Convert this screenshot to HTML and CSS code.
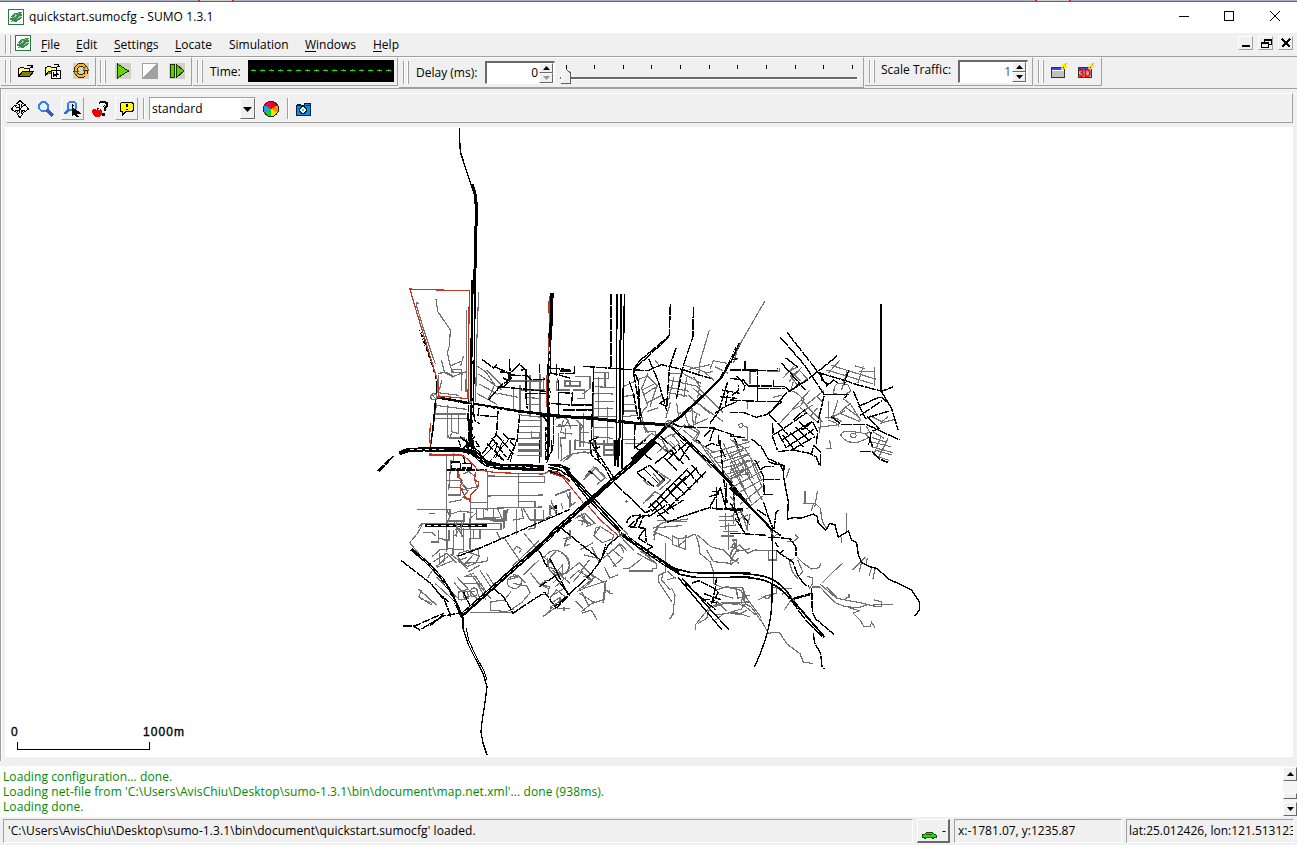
FILE: index.html
```html
<!DOCTYPE html>
<html lang="en">
<head>
<meta charset="utf-8">
<title>quickstart.sumocfg - SUMO 1.3.1</title>
<link rel="stylesheet" href="styles.css">
</head>
<body>
<svg width="0" height="0" class="defs"><defs>
<symbol id="logo" viewBox="0 0 16 16"><path d="M.5.5h15v15H.5z" fill="#fff" stroke="#287d3c"/><path d="M2 8l3-2 1-2h3l1-1h4v1l-2 1h2v2l-2 1h2l-1 2-3 1-2 2H3v-1l2-1H2V9l3-1z" fill="#3c8a50"/><path d="M5 9l4-3M9 10l4-3M10 4v1M7 5h1M4 12h2" stroke="#a4d0ad"/></symbol>
<symbol id="spark" viewBox="0 0 6 6"><path d="M0 3h6M3 0v6M1 1l4 4M1 5l4-4" stroke="#ffe800"/><path d="M4 1h1V0h1v1H5v1H4zM0 4h1v1H0z" fill="#f08020"/></symbol>
</defs></svg>
<div class="window">
<div class="desktop-strip"><i></i><i></i></div>
<header class="titlebar"><svg class="logo"><use href="#logo"/></svg><span>quickstart.sumocfg - SUMO 1.3.1</span>
<svg class="caption" viewBox="0 0 101 11"><path d="M0 5.5h10M45.5.5h9v9h-9z" fill="none" stroke="#000"/><path d="m91 0 10 10M101 0 91 10" stroke="#000" shape-rendering="auto"/></svg></header>
<nav class="menubar"><i class="grip"></i><svg class="logo"><use href="#logo"/></svg>
<div class="menus"><span class="file"><u>F</u>ile</span><span class="edit"><u>E</u>dit</span><span class="settings"><u>S</u>ettings</span><span class="locate"><u>L</u>ocate</span><span class="simulation">Simulation</span><span class="windows"><u>W</u>indows</span><span><u>H</u>elp</span></div>
<div class="mdi-buttons"><b><svg viewBox="0 0 14 12"><path d="M3 9h8" stroke="#000" stroke-width="2"/></svg></b><b><svg viewBox="0 0 14 12"><path d="M5.500 6.500v-4h7v5h-3M5 3h8M2.500 5.500h7v5h-7zM2 6h8" fill="none" stroke="#000"/></svg></b><b><svg viewBox="0 0 14 12"><path d="m3 2 8 8M11 2l-8 8" stroke="#000" stroke-width="2.600"/></svg></b></div></nav>
<section class="toolbars">
<div class="bar files"><i class="grip"></i>
<svg class="icon" viewBox="0 0 16 16"><path d="M.500 13.500v-8h1l1-1h3l1 1h5v3" fill="#ffff80" stroke="#000"/><path d="m.500 13.500 4-5h11l-4 5z" fill="#808000" stroke="#000"/><path d="M9 3V2h4v2M12 4h3M14 2v3" fill="none" stroke="#000"/></svg>
<svg class="icon" viewBox="0 0 16 16"><path d="M.500 12.500v-8h1l1-1h3l1 1h5v3" fill="#ffff80" stroke="#000"/><path d="m.500 12.500 3-4h8" fill="#808000" stroke="#000"/><path d="M9 2V1h4v2M12 3h3" fill="none" stroke="#000"/><path d="M6.500 7.500h9v8h-9z" fill="#fff" stroke="#000"/><path d="M8 9v5l5-4M8 11h6M11 8v6" stroke="#000" fill="none"/></svg>
<svg class="icon" viewBox="0 0 16 16"><path fill="#d4d0c8" d="M0 0h16v16H0z"/><path d="M3 10V5l3-3h4l3 3" fill="none" stroke="#322600" stroke-width="4"/><path d="M13 7v3l-3 3H6l-3-3" fill="none" stroke="#322600" stroke-width="4"/><path d="M3 9V5l3-3h4l3 3M13 8v3l-3 2H6l-3-3" fill="none" stroke="#fdb813" stroke-width="2"/><path d="M10 7h6l-3-4zM0 8h6l-3 4z" fill="#fdb813" stroke="#322600" stroke-width=".7"/></svg></div>
<div class="bar run"><i class="grip"></i>
<svg class="icon" viewBox="0 0 16 16"><path fill="#d4d0c8" d="M0 0h16v16H0z"/><path d="M2.500 1v14l11-7z" fill="#65d500" stroke="#123800"/></svg>
<svg class="icon" viewBox="0 0 16 16"><path fill="#fff" d="M0 0h16v16H0z"/><path d="M15 0v15H0z" fill="#a0a0a0"/><path d="M.500.500h15v15H.500z" fill="none" stroke="#a0a0a0"/></svg>
<svg class="icon" viewBox="0 0 16 16"><path fill="#d4d0c8" d="M0 0h16v16H0z"/><path d="M1 1.500h4v13H1zM7 1v14l8-7z" fill="#65c900" stroke="#123800"/></svg></div>
<div class="bar clock"><i class="grip"></i><span>Time:</span><svg class="lcd" viewBox="0 0 146 22"><path fill="#000" d="M0 0h146v22H0z"/><path d="M3 10.500h140" stroke="#00f000" stroke-dasharray="5 4"/><path d="M5 9.500h138" stroke="#00b000" stroke-dasharray="1 8"/></svg></div>
<div class="bar delay"><i class="grip"></i><span>Delay (ms):</span><div class="spin"><span>0</span><div><i class="up"></i><i class="down off"></i></div></div>
<svg class="slider" viewBox="0 0 300 24"><path d="M7.500 5v4M35.500 5v4M64.500 5v4M92.500 5v4M121.500 5v4M150.500 5v4M178.500 5v4M207.500 5v4M236.500 5v4M264.500 5v4M293.500 5v4" stroke="#000"/><path d="M1 18h297" stroke="#696969" stroke-width="2"/><path d="M1 19.500h298v-3" stroke="#fff" fill="none"/><path d="M2.500 23V13l4-4 5 4v11z" fill="#f0f0f0"/><path d="M2.500 24V13l4-4" fill="none" stroke="#fff"/><path d="m7 9 4.500 4v10.500H2" fill="none" stroke="#606060"/></svg></div>
<div class="bar scale"><i class="grip"></i><span>Scale Traffic:</span><div class="spin"><span class="one">1</span><div><i class="up"></i><i class="down"></i></div></div></div>
<div class="bar views"><i class="grip"></i>
<svg class="icon" viewBox="0 0 16 16"><path d="M.500 4.500h13v10H.500z" fill="#c0c0c0" stroke="#333"/><path d="M1 5h9v2H1z" fill="#3048f0"/><path d="M1 7.500h12" stroke="#fff"/><use href="#spark" x="10" y="0" width="6" height="6"/></svg>
<svg class="icon" viewBox="0 0 16 16"><path d="M.500 4.500h13v10H.500z" fill="#c0c0c0" stroke="#333"/><path d="M1 5h9v2H1z" fill="#3048f0"/><text class="three-d" x="1" y="14" textLength="12" lengthAdjust="spacingAndGlyphs">3D</text><use href="#spark" x="10" y="0" width="6" height="6"/></svg></div>
</section>
<main class="child">
<div class="viewbar">
<span class="tool"><svg viewBox="0 0 18 18"><path d="m9 .500 3 3-2 1v3l3-2 1-1 3.500 4.500L14 12l-1-2h-3v3l2 1-3 3.500L6 14l2-1v-3H5l-1 2L.500 9 4 5l1 2 3 .500v-3l-2-1z" fill="#fff" stroke="#000"/><path d="m5 5 8 8M13 5l-8 8" stroke="#000" stroke-dasharray="2 1"/></svg></span>
<span class="tool"><svg viewBox="0 0 16 16"><circle cx="5.500" cy="5.500" r="4.500" fill="#e0f8ff" stroke="#407cf0" stroke-width="2"/><path d="m9 9 6 6" stroke="#3c58c8" stroke-width="3"/></svg></span>
<span class="tool raised"><svg viewBox="0 0 16 16"><circle cx="7" cy="5" r="4.500" fill="#c8f4ff" stroke="#407cf0" stroke-width="2"/><path d="m4 8-4 5" stroke="#3870d8" stroke-width="3"/><path d="M7 3v3l2-1zM7 6v9l2-2 2 3h3l-2-3h4l-3-3z"/></svg></span>
<span class="tool"><svg viewBox="0 0 16 16"><path d="M1 8h2l1 1h3l1-1 2 2v3l-2 3H3l-2-3-1-2z" fill="#f00000"/><path d="M5 9V7h2" stroke="#000" fill="none"/><path d="M8 3V2l2-1h2l2 1v3l-2 2v3" fill="none" stroke="#000" stroke-width="3"/><path d="M8 4V3l2-1h2l1 1v2l-2 2v3" fill="none" stroke="#fff"/><path d="M10 12h3v3h-3z"/></svg></span>
<span class="tool raised"><svg viewBox="0 0 16 16"><path d="M2.500 1.500h11l1 2v5l-1 2H7l-4 4v-4H2l-1-2v-5z" fill="#fff800" stroke="#000"/><path d="M8 3v3M8 8v1" stroke="#000" stroke-width="2"/></svg></span>
<i class="divider"></i><div class="combo"><span>standard</span><b></b></div>
<svg class="wheel" viewBox="0 0 16 16" shape-rendering="auto"><path d="M8 8V0A8 8 0 0 1 15 4z" fill="#f00000"/><path d="m8 8 7-4a8 8 0 0 1 0 8z" fill="#ff9000"/><path d="m8 8 7 4a8 8 0 0 1-7 4z" fill="#ffe000"/><path d="M8 8v8a8 8 0 0 1-7-4z" fill="#00d820"/><path d="m8 8-7 4a8 8 0 0 1 0-8z" fill="#18a0f0"/><path d="M8 8 1 4a8 8 0 0 1 7-4z" fill="#e01048"/><circle cx="8" cy="8" r="7.500" fill="none" stroke="#222"/></svg>
<i class="divider second"></i>
<svg class="camera" viewBox="0 0 16 14"><path d="M.500 3.500h8v-2h6v12H.500z" fill="#0a8ce8" stroke="#002030"/><path d="M1 2h4M10 3h4" stroke="#001828"/><circle cx="7" cy="8" r="3.500" fill="#fff" stroke="#002030" stroke-width="1.500"/><circle cx="7" cy="8" r="1.500" fill="#50b8f0"/></svg>
</div>
<svg class="network" viewBox="5 127 1288 630" fill="none">
<g class="roads">
<!-- river expressway, north and south branches -->
<g stroke="#000"><path d="M459.500 128v12l1 12 4 13 6 18 4 12 3 9v7" stroke-width="1.500"/><path d="M472 184l3 10 1.500 15-1 35-1 50" stroke-width="3"/><path d="M462 614l1 14 5 16 7 14 8 15 4 14-2 15-3 20-1 10 2 11 4 12" stroke-width="1.300"/><path d="M466 628l3 13 7 15 8 15 3 9" stroke-width="1"/></g>

<g transform="translate(370 280) scale(.33333)">
<g class="gray"><path d="M138 68l8 2-8 2 24 80 34 100M198 58l5 36 38 56-3 48-6 20 10 44 12 18M326 36l-6 160-3 170M290 90l-2 245M280 228l-8 30M214 240l10 38 26 14M205 284l-2 54 65 8M216 300l-8 30M246 268h29v10h-29zM276 280l-2 52M240 258l36-15M200 370l-10 68M196 376l94 12M195 402h92M190 416h102M232 375l2 100M245 400v55l20 6v-57zM245 458l-6 16h46M205 280l24-3 22 12 20-8 18-6"/>
<path d="M320 258l26 16 28 40-20 45M326 282l70 48M328 312l57 32M320 340l62 34M350 270l52 52M385 340l58 12M430 320v70M450 315v80M480 284v120M510 282v116M420 303h96M470 353l38 2v18h-38zM452 330h74M445 404l70 8M445 422h68M444 440h68M444 458h68M444 476h68M443 495h70M443 514h67M484 456l25 3v14h-25zM513 400v132M556 418c20-10 38-4 40 10M558 440h24l12-16M566 460v78M575 540l-3-66h14v-30M540 50l-1 105M520 292v35M562 294l-3 36h40M584 302h16v16h-16z"/></g>
<g class="black"><path d="M336 238l35 26 10-12M374 260l40 18 4 24-18 22M419 238l1 62M425 276l24-24 17 16-14 3M420 285l50 2 15 12 52-2M390 276l34 2M399 294l16 8-24 15M385 320l64 6 95 10M468 266v84l4 38M532 276l68 18M535 264l65 5M543 370l57 5M560 253v34M509 253v25M355 360l42-48M410 305l16-11M470 340h62"/>
<path d="M296 80v430M292 398l4 40M314 402v20l15 10M327 384l-3 22 56 4M384 394l-4 62-3 10-42 58M352 490l45 50M366 474l43 58M378 462l52 60M400 460l34 39M410 475l28 3M449 404l-8 80-28 56M515 402l14 20-2 118M550 408v82l-6 30" class="stitched"/></g>
<g class="arterial"><path d="M306 0l-1 190-4 310" stroke-width="7"/><path d="M315 0l-2 250-8 260" stroke-width="5"/><path d="M200 352l100 18 140 23 160 18" stroke-width="8"/><path d="M547 40l-3 90-7 100-3 150-3 160" stroke-width="8"/><path d="M150 150l36 104 14 46v50M197 360l-8 85-8 55" stroke-width="5"/></g>
<g class="road-gap"><path d="M150 150l50 154M202 358l230 37M530 405l-2 130M309 230l-3 250"/></g>
<g class="red"><path d="M120 28l178 4-4 324-87-8-5-48-70-230-12-42M538 48l-2 50M536 175v42M531 285l-2 92M181 430l-3 60"/><path d="M200 350h14M118 27h8" stroke-width="6"/></g>
<g class="gray"><circle cx="191" cy="350" r="9"/><path d="M185 342l15 18M297 366h10M523 408h18"/></g>
<g class="black"><path d="M270 470l50 40M275 510l40-40M282 500h46l-12-18M290 478l5 48M310 480l2 50M265 480l8 20"/></g>
</g>

<g transform="translate(540 280) scale(.33333)">
<g class="gray"><path d="M75 305h45v13H75zM105 290h45v35l-22 17M98 330h35v25h-22M160 278h46v18h-46zM165 320l60 3M160 340l60 2M165 365h56M160 385h60M160 410h68M160 442h62M162 470l58 5M160 492h60M175 290v130M195 280v40M202 380v110M160 265v230"/>
<path d="M110 420l18 18-8 20h28M120 430v70M106 480l45 10M80 540l20-20 56-4M250 320l32-15M250 350l34-6M248 373h38M248 393h40M250 410l44-4M250 478h38M255 490h65M290 300l33-12 30 30-44 27M324 280l-19 46 18 50-23 28M306 330l40-20M318 370l50-25M320 395l35-12M350 320l-20 60"/>
<path d="M345 240l15 20M388 280h40l55 30M388 300l80 18M386 322l62 12M384 338l56 10M402 290l-16 70M422 280l-12 75M440 290l-8 60M432 255l60 20 30 26M446 268l65-14M508 150l-28 96-4 40M460 290l20 30-8 35M445 345l65 56M460 325l36 33M470 318l80 80M392 365l-15 50M410 370l6 40M430 390l18 50M418 400l38-8 25 14M456 385l4 50 45-20M470 400l-5 28"/>
<path d="M366 480l30-18 22 28-32 25zM395 470l38-35 45 26-15 25M430 450l28 24M443 430l36 25-22 26M300 390l18 70M300 415l26 45M310 440l16 20M315 455h30l8 20M300 490l35-30 30 20M560 250l-40-8-10 24M524 260l40 20M495 280l25-6M460 360l90 65M55 435l60 2M70 420l-8 38 34 4M85 425l8 22M130 400v100"/></g>
<g class="black"><path d="M213 42v225M391 72l-3 95-92 78-16 25 16 35 2 100 5 20M460 80l-1 90-30 90-20 98M408 204l-20 60-8 120M130 259l75 5 52 4 66 4 42-18 67 16 45 15 35 10M93 273h-37M104 258v22M326 236l28 66 26 90M268 304l13 40 14 76M285 430l-2 75 35-26M285 500l50 40M346 485l50 40M362 468l46 44M440 490l-60 50M455 487l-35 53M380 380l-20-10 22-15M100 275l3 6H56M55 300v115M55 374h105M70 390h86M118 388h40M98 337l-4 42M97 375h60M55 337l42 3M52 410h100M161 265l-7 220 24 55M153 480l22-8M180 500l-20 12"/>
<path d="M388 170l-106 98M280 275l24 135M398 430l20 10 105 4-14 40M510 430l26-35 27-90M525 400l30-20 10-48M555 380l35-15M540 350l50 5M545 330l55 10M520 445l60 20 15 40M535 465l3 30 20 40M495 500l20-10 24 8M511 450l-20 20"/></g>
<g class="arterial"><path d="M35 40l-6 130-5 370" stroke-width="8"/><path d="M231 42l-2 498M253 42l-6 490" stroke-width="4"/><path d="M243 42l-5 485" stroke-width="6"/><path d="M0 405l155 10 125 14 106 5" stroke-width="9"/><path d="M386 432l30-17 75-69 52-52 57-105" stroke-width="8"/><path d="M384 435l-39 40-70 63M386 432l30 30 84 78" stroke-width="9"/></g><g class="road-gap"><path d="M549 275l46-90M390 430l55-52M405 451l70 65M233 280v250M28 200v180"/></g>
<g class="red"><path d="M28 50v80M25 175v45M20 290v90"/></g><g class="gray"><circle cx="387" cy="432" r="11"/><path d="M383 424l14 17M377 439l20-18"/></g>
</g>

<g transform="translate(730 290) scale(.33333)">
<g class="gray"><path d="M104 34L23 175l-12 43M330 210l-34 38M290 240l140 42M303 226l136 42M352 240l-17 60M400 228l-17 52M434 230v58M376 228l30 8M388 244h46M166 233l22 18 24 22M195 225l-35 38M215 232l-38 42M182 258l22 30 28-22-24-25zM205 230l-24 12M190 275l-8 26 18 8 22 20-10 18-30 15M240 300L145 405M130 322l25-6M235 350l-20-20M232 342l50-40M260 318l20 20"/>
<path d="M210 352l52 44M230 348l48 48M219 365l28-20M240 380l22-26M265 375l8 16M313 290l10-10 30 3 10 20-20 12-32-4zM344 270l-6 18M324 330l-16 50 28 15M340 326l20 15-30 25M330 370l60 25M345 350l40 30M360 340l34 54M305 382l40-20M295 334v52M263 412l65-8M268 430l5-40M285 382l38 4 3 25M295 390l25 10"/>
<path d="M332 435c5-17 28-10 54-8 27 4 35 15 22 20-16 5-20 13-41 10-22 0-30-14-35-22M368 430c13-1 15 13 0 13-9-3-8-12 0-13M392 407v20M404 433l15-7-10-17M288 475h15l-4-25M428 425l35 20M425 442l42 14M422 455l60 15M424 470l65 18M435 480l50 15M432 496l45 15M454 438l-24 58M474 445l-30 60M420 377l36 18 18-15M450 400l44-12"/>
<path d="M52 332v24M60 240v42M110 244h38v-10M30 402c10-5 12 8 3 11-9-2-8-11-3-11M44 408l8 4v38h-15M0 448l45 28 30 50 18 40M0 500l40-20M0 520l55-26M0 540l62-30M0 560l70-34M20 470l50 96M0 485l38 80"/></g>
<g class="black"><path d="M151 142l72 82 60 90-20 86M171 127l90 115 30 43M266 243l55-45M263 244l-34 28-61 38-51 62M263 247l80 24 38 13 74 20 35-14M454 304l30 50 20 65M384 350l67-30 26 20M357 242l-10 22-4 22M288 290l22-20 14 8M275 248v22l18 12M370 302l20 50 18 35M391 376l65-43M412 383l66-20M284 313h70l-10 12M117 372l26 28 32 34M127 398v40l15 42M130 435l25-15 75-52M155 450l90-55M172 470l80-52M185 480l70-40M208 395l42 40M196 412l42 40M180 427l41 44M158 436l35 43M145 430l24 44M247 395l16 30-4 36M143 485l45-5 50 10 20 10 12 28M272 525v-40l-20-18-8 25M190 390l34-31M215 420l30-22M304 380l30 23h75l100 47M412 380l35 35-23 10-8 40M416 440l12 30M390 484h36l20 22 28 11M155 220l75 84M167 204l38 28M130 430l-3-30"/>
<path d="M0 240h60M45 213v25M38 242h105v-9M60 244l22-2v92M0 265l40 5 15 18M55 288h75v-18M130 290h34l17 14 28-24M0 330l80 4h75M155 335l-43 38-33 9-37-14H0M0 210l24-4M20 258l25 28-4 17M5 317l20-15V286M83 280v50M82 295h82M45 443L0 438M65 447l29 24 20 35 35 15 14 28"/></g>
<g class="arterial"><path d="M453 42l-1 262" stroke-width="6"/><path d="M0 218l22-50" stroke-width="8"/><path d="M55 241h30" stroke-width="7"/><path d="M285 314h67" stroke-width="5"/></g><g class="road-gap"><path d="M0 213l20-44"/></g>
</g>

<g transform="translate(370 440) scale(.33333)">
<g class="gray"><path d="M230 45v165l10 20-10 20v85M243 60l-7 90M250 40v30M178 42l98 3M230 90h46M230 122h48M235 142h36v23h-36M236 187l40-8M240 206v24M265 95l9 38 20 20-15 20 22 8M279 102l18-8 16 15 7 32-29 6-20-25M297 152l-20-5M302 170v164M302 188h50M302 205l50 2M352 96v116M352 108l172 2M350 168l170-3M352 205l165-4M445 98v102M445 128h78v-20M445 185h50v20M142 208h98M178 220h16M230 208v35h52v-25M240 223l30-10 40 5M320 218l-20 18v32M320 205v32h58M340 207v26h50M370 208v35h30v25M360 240h48v-30M382 205l16 35M402 210v55M414 208l-8 30M440 206v80M430 240l30-5-5-30M460 205l20 35h40M495 206v58l-20 4M520 210v30M540 196v30M520 240l25-15"/>
<path d="M145 264l10-14h238v18H255M205 270v36h-22M208 295l25 5v30M237 270v30h-15M250 270v58h30v-63M280 268v66M160 278h26l12 10M310 270v26h20v-26M315 296h-15v30M158 252l-14 26-25 30 28 34M186 350l23-20 40-5v20M190 365l40-25 30 30M200 382l48-20M209 340v35M225 338l-4 30M233 350l-35 30M240 342l50 35M260 345l20 32 32-35-18-10-30 8M270 360l22-8M265 340v22l28 25M282 333l46 15-12 22-25 10M305 330l20-5v30M282 370l68-5 4-12M295 395l35-20M282 410l30-10"/>
<path d="M260 410l65 70M252 428l44 50M265 455h50M278 430h58M286 410h36M300 400l40 50M330 392l32 48M313 405l36 50M350 400l22 36M264 473c0-28 25-28 30-10s-30 22-30 10M280 467c0-30 25-20 22-5s-22 18-22 5M301 454c5-18 30-10 20 8s-22 4-20-8M318 444l12 35-20 14M320 425l28 55M338 448l26 30M172 415l16-25 20 18M145 447l50 45M155 450l-8 20 38 25M150 475l35 15M160 460l40 35M195 430l55 50M200 412l60 60M300 518h135l30-25"/>
<path d="M380 275l10 20 22-5M400 290l55 80M432 328l8-9 15 9-9 12M462 280l52 62M428 378l80-77M460 405l48-46M482 400l28 35 20-15M440 410c-30-10-40 30-10 35s35-45 0-40M412 420l35-10 20 20M423 455l-20 25-40 5-2 25 48 5 22-8M430 430l40 8 10 20-25 30-28 18M524 350c20-28 60-25 72 18s-36 40-48 22M532 353v26l38 15M520 350l30 25M588 300l-5 18 12-3M580 296l18-4M526 420l-10 15 20 12M550 400l20-4 12 20M550 428l22-22 28 24M554 442l34-30M540 470l46-27M513 435l25 5-5 25-14-3M550 485l20-12v20M548 500l-20 25-10 5 40-28M560 505h40M582 502v10M555 165l45-18"/></g>
<g class="black"><path d="M22 92l48-44M27 95l44-47M230 90h120M245 66h26v20h-26zM276 70h28v14h-28M316 330l284-122M314 330l-48 18M94 362l90 70 40 50 20 50M184 432l22 28 30 25M100 558h30l20 12 70-42 55-10M130 560l85-38M372 445l30 28 27 46 95-62 34 47 42-40M508 332l18 40 70 90M508 440l50-34M280 455l22 45M280 45l5 24M282 0l26 25M306 0l-8 20M315 25l18 15M290 25l6-15M544 206l14-8v24M370 437l18-12" class="stitched"/><path d="M280 530v40M220 520l-8 12-32 25" stroke-width="4"/><path d="M380 6l-42 48M382 10l-6 20 28 34M400 0l-24 55M440 0l-20 66M415 0l-55 64M508 0v70M545 0v30l-15 40" stroke-width="3"/></g>
<g class="gray"><path d="M445 10h70M445 30h70M442 46h72"/></g>
<g class="arterial"><path d="M88 40l24-9 48-3 110 1 42 8" stroke-width="13"/><path d="M308 35l40 35 40 10 135 4" stroke-width="19"/><path d="M535 73l38 3 27 12" stroke-width="5"/><path d="M535 82l27 4 38 24M535 92l28 4 37 27" stroke-width="4"/><path d="M165 257h186" stroke-width="8"/><path d="M124 328l54 45 42 48 25 40 20 44 12 28" stroke-width="9"/><path d="M275 526l90-80 50-45 82-72 55-50 50-42" stroke-width="12"/></g>
<g class="road-gap"><path d="M120 28h110M320 53l34 25 152 4M150 347l66 68 42 80M280 519l120-105 75-66M518 313l70-58M320 42l20 20M170 257h175"/></g>
<g class="red"><path d="M178 45h95l20 12 30 32 55 9 140 4 21-8 30 4 29 28M181 0v15M264 92v20l12 8-5 22 15 30M316 95l-2 26 12 4-3 20-20 18-4 23M282 172l18 5v8"/></g>
<g class="gray"><path d="M250 242l30 50M283 244l-30 45M260 240v50M275 240v50"/></g>
</g>

<g transform="translate(550 440) scale(.33333)">
<g class="gray"><path d="M60 0v43l-30 20M75 0v28h60M90 8h50v22M40 65l24-22 42-8 12 8M162 0v45h30V0M165 15h33M164 30h34M105 110l26-28 34 25M100 120l38-37 28 30-25 20M117 90l40 37M130 80l40 36M15 167l48-19M60 155v45l18-14M0 195l20 22M3 182l16 40M34 190l4 16M50 160l15 35"/>
<path d="M76 235l28-15 30 30-25 10M83 224l40 28M86 240l34 12M94 220l20 38M104 224l-8 30M135 265l16-5 40 25-8 30M137 266l-5 22 25 20 28-10M150 262l-16 20M60 270v25l-14 8M52 292l-8 26 16-5M18 335c-55 44 0 88 28 65 21-22 12-54-13-62M20 395l18-20v35M48 400l40-32 45 45-45 35M60 415l27-24 40 30-27 24M88 400l30-40M70 425l28-32M95 395l24 25M103 345l48 12M90 330l40-22M125 320l24 50"/>
<path d="M0 475l20-25 28 22-48 30M80 455l28-12 60-20-5 55-30 10-45-28M100 410l30-8M128 405l40 28M95 455l20 40 42-15M94 515l40-32M76 482l30 32M95 520l28-10 18 28M165 430l-6 60M170 450l10 10h10M178 450v8M160 355l28-25 30 25-30 25M170 340l30 42M188 332l20-20 14 25M210 288l42 44M212 312l18 20M163 380l16 34 26-10M220 385h18l38-30M238 393h70v-7h12v-14M262 340l58 32M250 310l70 62M270 334l58 30M290 330l36 23M285 343l34 30"/>
<path d="M312 300l8-40 20-13 73-10M322 242l89 2M310 264l85-7M310 275l45 18 14 12M330 252l-20 35M346 310v86l-20 10v20l40 60M350 392l28 24M340 397l-6 22 28 32M350 420l28-8M365 445l10 20-6 58-10 15M365 287l20 10 28-5 22-10M367 288v25l39 15 2-42M386 300v17l22-17M436 282l10 28 4 30 30 25 10 30v35l25 12 30 2 30 8 6 30M440 284l20 16 22 20 38 10 25 25-5 15-50-5-20-35"/>
<path d="M552 310l-8 12 20 7-20 25M550 300l12 34 38-8M556 340l-13 15 24 15M535 250v80M508 230h44M508 242h44M510 260l48-5M518 275h45M512 288h40M526 220v50M551 218v34M285 185l30-30 20 12-30 30M280 190l30-25M300 138l-20-18M308 98l25 32M320 90l25 22-25 25M330 100l32 20-34 30M342 122l-20 20M230 180v10M225 185h8M320 40l24-22 18 25M330 15l20 22M350 5l20 17M360 3l16 16"/>
<path d="M500 450l30-10 30 5 2 30 38-10M493 500l30-10 40 3M500 460l50 15M484 500l32-12 84-2M494 526l60-10 46 15M500 483l30 30M497 540l26-20M438 570l-2-15 40-50M445 550l25-15 11-35"/>
<path d="M480 40L600 5M490 55l110-35M500 70l100-30M515 85l85-22M520 105l80-22M525 120l75-22M470 30l80 100M520 10l65 140M550 0l50 110M440 35l45 50M450 10l60 85M430 0l60 36"/></g>
<g class="black"><path d="M0 357l55 108M34 265l115 93v8l-30 40-65 60-40 35M116 93l12 8M192 128l95 90 20-10M150 364l25-50 35-28M156 353l12-42M262 100l50 40M280 85l45 45M300 75l45 46M262 97l35-20M315 70l26-20 40 42M340 50l22-18 38 40M365 30l20 32M385 15l34 45M305 215l135-132M295 205l120-122M320 200l90-92M350 210l118-115M300 190l55 60M316 180l40 42M330 165l42 45M350 145l35 39M370 128l34 36M388 112l34 38M410 90l34 38M425 74l34 40M320 230l80-50M380 235l98-32 25 4h75M480 200l30-55M500 140v65M478 170l28-8M485 155h20M530 130l-5 80M550 150l5 70M510 140l20 70M555 235l30 45M575 222l25 32"/>
<path d="M230 250c2-24 25-28 70-22M235 260l35-30 28-5M250 263l22-35M265 264l18-40M235 260l50 5-20 30 42 25M285 265l4 40M308 320l-18 10M300 228l52-35M355 245l32-10M390 0l20 20M440 0l12 8M510 0l10 110 12 80M425 430l20-8 42 20 18 15-18 32M405 430l92 80M500 410l-5 40-12 50M462 461l50 18M480 485l22 4M455 480l28-2M120 0l4 45 40 35 20 40M135 0l5 35 50 75" class="stitched"/>
</g>
<g class="arterial"><path d="M0 285l118-102 70-63 65-55 62-61" stroke-width="13"/><path d="M40 80l68 80 104 113" stroke-width="5"/><path d="M50 88l70 75 100 106M50 97l65 83 95 98" stroke-width="4"/><path d="M204 0v82M195 0v78M216 0v87" stroke-width="5"/><path d="M212 280l50 35 85 58 40 24" stroke-width="12"/><path d="M412 5l65 60 60 60 63 76" stroke-width="9"/><path d="M370 385l50 12 60 3 120-1M384 402l50 10 65 1 101-2" stroke-width="5"/><path d="M0 75l38 8 12 12M0 85l35 8 12 12M0 95l38 12" stroke-width="4"/><path d="M384 412l132 158M396 414l141 156" stroke-width="4"/></g>
<g class="road-gap"><path d="M10 276l80-70M180 127l64-55M212 272l60 52 80 54M430 22l60 55"/></g>
<g class="red"><path d="M0 99l38 12 61 76M115 198l37 43 53 46"/></g><g class="gray"><path d="M220 280l-10 10-5-20M220 270l14 13"/></g>
</g>

<g transform="translate(730 460) scale(.33333)">
<g class="gray"><path d="M0 35l55-35M0 60L90 3M0 85l94-50M10 107L100 57M30 133l70-55M50 147l50-40M0 15l65 115M25 0l72 120M62 0l34 80M0 110l14 12-10 25M0 170l40-18M10 184l45-20M33 150l20 62M60 163l-10 48M178 25l-10 30M225 94v35M218 130h38l15 15 6 40 12 20M262 94l-8 48M350 160v55M335 230v18M250 132l-6 20M367 330l40-40M394 310l-6 25M412 294l-4 20M425 325l-8 22M435 328l-6 28M195 223l10 10-15 12h-20M115 272l-40-2-22 10-25-25-22 15-6 17M115 272v28h25v-28zM5 240h15v30l-18 32h22M18 250l-18 40M0 315l26-20"/>
<path d="M200 290l20 20 25 17 22-4 6-14M193 293l-15 14 10 30 16 20M203 300l15 35-10 12M230 350l17 2v20l-10 14M275 370l35-35 28-25M245 381h25l45 47 30 12 40 3 35-11M270 372l50 43 75 14M395 429l35 9 25 2v-15l-22-5M430 433h60M345 415l12-3v-10M355 442l32 10-18 8M370 460l20 20 12 20h18l5-13 10 15M290 382l30 30"/>
<path d="M85 420l22-12 32-8v-22M125 380l20 5h42M92 410l18 5M130 400l-18 18M163 450l20-30M170 398l-15 5M0 382h38l8 50-12 15-34 10M38 382l10 30 45 60M45 430l20 12 35 50 15 28 20-3 15 2 20 32 40 30 10 25 30 5M40 400l-6 30 45 36M0 430h25l15 10M0 460l26 3 24-12"/></g>
<g class="black"><path class="ridge" d="M115 5l20 7 28 4-3 29 8 45 7 35-3 53 18-5 25 1 35-12 12 8 3 20 23 20 12-20 15 5 10 37 30-19 10 27 15 8 5 37 10 23 25 12 20 5 40 35 20 8 45 22 23 35v25l-13 18"/>
<path d="M75 0l15 28 10 20 3 55M92 28l14-9h27M98 58h52M100 103h30M100 125l15 45 15 38M146 150l-8 8-6 50M128 210l25 17M115 232h28l38 5 17 25v27M140 270l16 15 32 20 15 40 20 28 14 6M135 247l10 15M152 280l8-10M245 385l2 70 10 22 56 47M183 420l45 62 54 52M183 420l58-16M190 425l92 105M190 415l55-15M250 520l4 30 18 30 4 40 8 8M262 0l6 14M455 0l18 8M0 150h40M0 220h24l85 6M18 155l20 56M80 148l34 22M0 130l20 25" /></g>
<g class="arterial"><path d="M0 83l70 67 36 37 20 25v32" stroke-width="7"/><path d="M128 244l-2 180c-2 45-8 100-52 196" stroke-width="4"/><path d="M0 340c100 0 148 10 188 80l95 110M0 352c90-3 136 10 180 65" stroke-width="5"/></g>
<g class="gray"><path d="M120 210l12 20 13-10M183 410l10 12"/></g>
</g>
</g>
<g class="map-scale"><path d="M17.500 742v7.500h132V742" stroke="#000"/><text x="11" y="736" textLength="8">0</text><text x="143" y="736" textLength="41">1000m</text></g>
</svg>
</main>
<section class="log"><pre>Loading configuration... done.
<span>Loading net-file from 'C:\Users\AvisChiu\Desktop\sumo-1.3.1\bin\document\map.net.xml'... done (938ms).</span>
Loading done.</pre><div class="scroll"><b class="up"></b><i></i><em></em><b class="down"></b></div></section>
<footer class="status"><div class="message">'C:\Users\AvisChiu\Desktop\sumo-1.3.1\bin\document\quickstart.sumocfg' loaded.</div><div class="vehicle"><svg viewBox="0 0 16 8"><path d="M1 6V4l3-1 2-2h5l2 2 2 1v2z" fill="#00ef00" stroke="#006000"/><path d="M5 3h6" stroke="#803020"/><path d="M3 7h2M11 7h2" stroke="#005000"/></svg><span>-</span></div><div class="xy">x:-1781.07, y:1235.87</div><div class="geo">lat:25.012426, lon:121.513123</div></footer>
</div>
</body></html>
```
FILE: styles.css
```css
*{box-sizing:border-box}
body{margin:0;overflow:hidden;background:#f0f0f0;color:#000;font:12px/16px "Open Sans","Noto Sans",sans-serif}
i,em{font-style:normal}b{font-weight:400}svg{display:block;flex:none;shape-rendering:crispEdges}
.defs{position:absolute}
.window{width:1297px;height:845px;display:flex;flex-direction:column;background:#f0f0f0}
.desktop-strip{height:2px;background:#adb0c6;border-bottom:1px solid #1979ca;display:flex;padding-left:198px;gap:801px;flex:none}
.desktop-strip i{width:36px;height:1px;background:#ccc;border:solid #e81c24;border-width:0 2px}
.titlebar{height:31px;background:#fff;display:flex;align-items:center;padding:0 17px 2px 8px;gap:5px;flex:none}
.logo{width:16px;height:16px}
.titlebar span{letter-spacing:.08px}.caption{width:101px;height:11px;margin-left:auto}
.menubar{height:24px;border-bottom:1px solid #a0a0a0;display:flex;align-items:center;padding:0 4px 0 5px;flex:none}
.grip{width:6px;height:19px;flex:none;border:solid #a0a0a0;border-width:0 1px;background:linear-gradient(90deg,#fff 1px,#f0f0f0 1px 3px,#fff 3px)}
.menubar .logo{margin:0 10px 3px 4px}.menus{display:flex}.menus span{white-space:nowrap}
u{text-underline-offset:2px;text-decoration-thickness:1px}
.file{width:35px}.edit{width:38px}.settings{width:61px}.locate{width:54px}.simulation{width:76px}.windows{width:68px}
.mdi-buttons{display:flex;gap:5px;margin-left:auto;padding-bottom:3px}.mdi-buttons b{width:15px;height:14px;border:1px solid #fff;border-right-color:#a0a0a0;border-bottom-color:#a0a0a0}.mdi-buttons svg{width:14px;height:12px}
.toolbars{height:32px;border-bottom:1px solid #a0a0a0;display:flex;align-items:flex-start;padding-left:1px;flex:none}
.bar{height:29px;border:solid #a0a0a0;border-width:0 1px 1px 0;border-top:1px solid #fff;display:flex;align-items:center;padding-left:4px;margin-right:1px;white-space:nowrap;flex:none}
.bar .grip{height:23px}.icon{width:16px;height:16px;margin-bottom:1px}.files{width:95px}.files .icon{margin-left:7px}.files .icon+.icon{margin-left:11px}.files .icon+.icon+.icon{margin-left:12px}
.run{width:95px;padding-left:3px}.run .icon{margin-left:9px}.run .icon+.icon{margin-left:11px}
.clock{width:205px}.clock span{margin-left:7px;width:38px}.lcd{width:146px;height:22px;margin-bottom:1px}
.delay{width:465px;height:31px}.delay>span{margin-left:7px;width:69px}
.spin{width:70px;height:23px;border:2px solid #696969;border-right:1px solid #fff;border-bottom:1px solid #fff;background:#fff;display:flex;padding-right:1px;align-items:center}.spin>span{width:51px;text-align:right}.spin>div{margin-left:auto;width:14px}.spin i{display:block;height:10px;padding:2px 3px;background:#f0f0f0;border:1px solid #fff;border-right-color:#696969;border-bottom-color:#696969}
.up::after,.down::after{content:"";display:block;width:7px;height:4px;background:#000;clip-path:polygon(50% 0,100% 100%,0 100%)}.down::after{clip-path:polygon(0 0,100% 0,50% 100%)}.off::after{background:#999}
.slider{width:300px;height:24px;margin:0 0 1px 4px}.scale{width:168px}.scale>span{margin:0 0 3px 6px;width:77px}.spin .one{color:#47566e}
.views{width:68px}.views .icon{margin-left:7px}.views .icon+.icon{margin-left:11px}.three-d{font:bold 10px "Liberation Sans",sans-serif;fill:#f00000;stroke:#f00000;stroke-width:.4px}
.child{height:672px;flex:none;border-left:1px solid #a0a0a0;padding:4px 4px 0;box-shadow:inset 1px 0 #fff}
.viewbar{height:30px;margin-left:1px;border:1px solid #a0a0a0;border-top-color:#fff;border-left-color:#fff;display:flex;align-items:center;padding:1px 0 0 1px}
.tool{width:23px;height:23px;display:flex;justify-content:center;align-items:center;margin-right:4px;border:1px solid transparent}.tool:first-child{margin-right:3px}.tool svg{width:16px;height:16px;overflow:visible}.tool:first-child svg{width:18px;height:18px}.raised{border:1px solid #fff;border-right-color:#a0a0a0;border-bottom-color:#a0a0a0}
.divider{width:2px;height:21px;border-left:1px solid #a0a0a0;border-right:1px solid #fff;margin-left:1px}.combo{width:107px;height:23px;margin-left:4px;background:#fff;border:1px solid #a0a0a0;border-right-color:#fff;border-bottom-color:#fff;display:flex;align-items:center}.combo span{margin-left:2px;letter-spacing:.05px}.combo b{margin-left:auto;width:15px;height:21px;padding:8px 2px 0;background:#f0f0f0;border:1px solid #fff;border-right-color:#696969;border-bottom-color:#696969}.combo b::after{content:"";display:block;width:9px;height:5px;background:#000;clip-path:polygon(0 0,100% 0,50% 100%)}.wheel{width:16px;height:16px;margin-left:7px}.second{margin-left:8px}.camera{width:16px;height:14px;margin-left:7px}
.network{width:1288px;height:630px;margin-top:4px;background:#fff}
.gray{stroke:#707070;stroke-width:3.5}.black{stroke:#000;stroke-width:4.2}.arterial{stroke:#000}.red{stroke:#c53722;stroke-width:3.6}.road-gap{stroke:#fff;stroke-width:3;stroke-dasharray:13 9}.black path{stroke-dasharray:34 3}.black .stitched{stroke-dasharray:26 3}.black .ridge{stroke-dasharray:none}.map-scale text{font:12px "Liberation Sans",sans-serif;fill:#000;stroke:#000;stroke-width:.35px}
.log{height:56px;flex:none;border-top:5px solid #f0f0f0;background:#fff;color:#008a00;display:flex;justify-content:space-between}.log pre{margin:3px 0 0 3px;font:12px/15px "Open Sans",sans-serif;letter-spacing:.09px}.scroll{width:14px;background:#f5f5f5;display:flex;flex-direction:column;padding-top:1px}.scroll b,.scroll em{border:1px solid #fff;border-right-color:#696969;border-bottom-color:#696969;background:#f0f0f0;height:14px}.scroll b{padding:4px 3px}.scroll i{height:12px}.scroll em{height:6px;margin-bottom:3px}
.status{height:28px;flex:none;display:flex;padding:2px 3px 2px;gap:4px;background:#f0f0f0;white-space:nowrap}.status>div{height:24px;border:1px solid #a0a0a0;border-right-color:#fff;border-bottom-color:#fff;line-height:22px;padding-left:3px;overflow:hidden}.status .message{width:910px;padding-left:4px;letter-spacing:.09px}.status .vehicle{width:33px;border:1px solid #fff;border-right:2px solid #696969;border-bottom:2px solid #696969;display:flex}.vehicle svg{width:16px;height:8px;margin-top:11px}.vehicle span{margin-left:5px}.status .xy{width:168px}.status .geo{width:168px;padding-left:2px}
```
